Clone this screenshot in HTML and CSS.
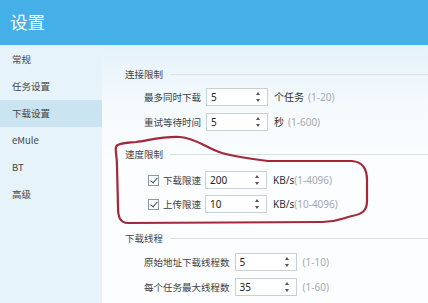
FILE: index.html
```html
<!DOCTYPE html>
<html lang="zh-CN">
<head>
  <meta charset="UTF-8">
  <title>设置</title>
  <link rel="stylesheet" href="styles.css">
</head>
<body>
  <header class="top-bar">
    <h1>设置</h1>
  </header>

  <div class="settings">
    <!-- Side menu -->
    <ul class="menu">
      <li>常规</li>
      <li>任务设置</li>
      <li class="active">下载设置</li>
      <li>eMule</li>
      <li>BT</li>
      <li>高级</li>
    </ul>

    <!-- Download settings -->
    <div class="panel">
      <section class="group group-conn">
        <div class="group-title"><span>连接限制</span><i class="rule"></i></div>
        <div class="row">
          <label>最多同时下载</label>
          <div class="spin"><span>5</span><b class="arrows"></b></div>
          <span class="unit">个任务</span><span class="range gap">(1-20)</span>
        </div>
        <div class="row">
          <label>重试等待时间</label>
          <div class="spin"><span>5</span><b class="arrows"></b></div>
          <span class="unit">秒</span><span class="range gap">(1-600)</span>
        </div>
      </section>

      <section class="group group-speed">
        <div class="group-title"><span>速度限制</span><i class="rule"></i></div>
        <div class="row check-row">
          <span class="check"></span>
          <label>下载限速</label>
          <div class="spin"><span>200</span><b class="arrows"></b></div>
          <span class="unit">KB/s</span><span class="range">(1-4096)</span>
        </div>
        <div class="row check-row">
          <span class="check"></span>
          <label>上传限速</label>
          <div class="spin"><span>10</span><b class="arrows"></b></div>
          <span class="unit">KB/s</span><span class="range">(10-4096)</span>
        </div>
      </section>

      <section class="group group-thread">
        <div class="group-title"><span>下载线程</span><i class="rule"></i></div>
        <div class="row">
          <label>原始地址下载线程数</label>
          <div class="spin"><span>5</span><b class="arrows"></b></div>
          <span class="range">(1-10)</span>
        </div>
        <div class="row">
          <label>每个任务最大线程数</label>
          <div class="spin"><span>35</span><b class="arrows"></b></div>
          <span class="range">(1-60)</span>
        </div>
      </section>
    </div>
  </div>

  <!-- hand drawn marker around the speed limit group -->
  <svg class="marker" width="428" height="303" viewBox="0 0 428 303">
    <path d="M116,147 C117,143 126,143 136,142 C150,140 165,136 180,137 C196,138 206,148 222,153 C236,157 252,159 268,161 L352,161 C363,162 367,170 367,180 L367,201 C367,211 362,214 352,216 C342,218 338,222 322,222 L128,223 C120,223 118,217 118,207 L117,166 C117,156 115,151 116,147 Z"
          fill="none" stroke="#a3283a" stroke-width="2.2" stroke-linejoin="round"/>
  </svg>
</body>
</html>
```

FILE: styles.css
```css
body {
  margin: 0;
  width: 428px;
  height: 303px;
  overflow: hidden;
  font-family: "Noto Sans CJK SC", "Noto Sans", sans-serif;
  font-size: 9.5px;
  color: #404040;
  background-color: #fcfdfe;
  position: relative;
}
.top-bar {
  height: 45px;
  background-color: #44b0e7;
  padding-left: 10px;
}
.top-bar h1 {
  margin: 0;
  font-size: 17.5px;
  font-weight: normal;
  line-height: 44px;
  color: #ffffff;
}
.settings {
  display: flex;
  height: 258px;
}
.menu {
  list-style: none;
  margin: 0;
  padding: 1px 0 0;
  width: 102px;
  background-color: #e7f3fa;
}
.menu li {
  height: 27px;
  line-height: 27px;
  padding-left: 12px;
  color: #444444;
}
.menu li.active {
  background-color: #cbe4f2;
}
.panel {
  flex: 1;
  padding: 21px 0 0 23px;
  background: linear-gradient(#e4f2fa, #f5fafd 60px, #fbfdfe 120px);
}
.group-title {
  display: flex;
  align-items: center;
  gap: 7px;
  height: 16px;
  color: #444444;
}
.rule {
  flex: 1;
  height: 1px;
  background-color: #d9e1e6;
}
.row {
  display: flex;
  align-items: center;
  height: 25px;
  padding-left: 19px;
}
.row label {
  margin-right: 5px;
}
.group-conn .group-title {
  margin-bottom: 2px;
}
.group-speed {
  margin-top: 12px;
}
.group-speed .group-title {
  margin-bottom: 6px;
}
.group-speed .row {
  height: 24px;
}
.group-thread {
  margin-top: 14px;
}
.group-thread .group-title {
  margin-bottom: 3px;
}
.check-row {
  padding-left: 23px;
}
.check-row label {
  margin-right: 4px;
}
.check {
  width: 9px;
  height: 9px;
  border: 1px solid #8c9ba6;
  background-color: #ffffff;
  margin-right: 4px;
  position: relative;
}
.check::after {
  content: "";
  position: absolute;
  left: 3px;
  top: 0;
  width: 3px;
  height: 6px;
  border: solid #3c4a55;
  border-width: 0 1.5px 1.5px 0;
  transform: rotate(40deg);
}
.spin {
  position: relative;
  width: 56px;
  height: 16px;
  border: 1px solid #c6d0d7;
  background-color: #ffffff;
  font-family: "Noto Sans", sans-serif;
  font-size: 10px;
  line-height: 16px;
  padding-left: 4px;
  margin-right: 6px;
}
.spin span {
  color: #222222;
}
.arrows {
  position: absolute;
  right: 6px;
  top: 3px;
  width: 5px;
  height: 10px;
}
.arrows::before,
.arrows::after {
  content: "";
  position: absolute;
  left: 0;
  border-left: 2.5px solid transparent;
  border-right: 2.5px solid transparent;
}
.arrows::before {
  top: 0;
  border-bottom: 3px solid #555555;
}
.arrows::after {
  bottom: 0;
  border-top: 3px solid #555555;
}
.unit {
  font-family: "Noto Sans", "Noto Sans CJK SC", sans-serif;
  font-size: 10px;
  color: #2e2e2e;
}
.range {
  font-family: "Noto Sans", sans-serif;
  font-size: 10px;
  color: #a4a9ad;
}
.range.gap {
  margin-left: 4px;
}
.marker {
  position: absolute;
  left: 0;
  top: 0;
  pointer-events: none;
}
```
